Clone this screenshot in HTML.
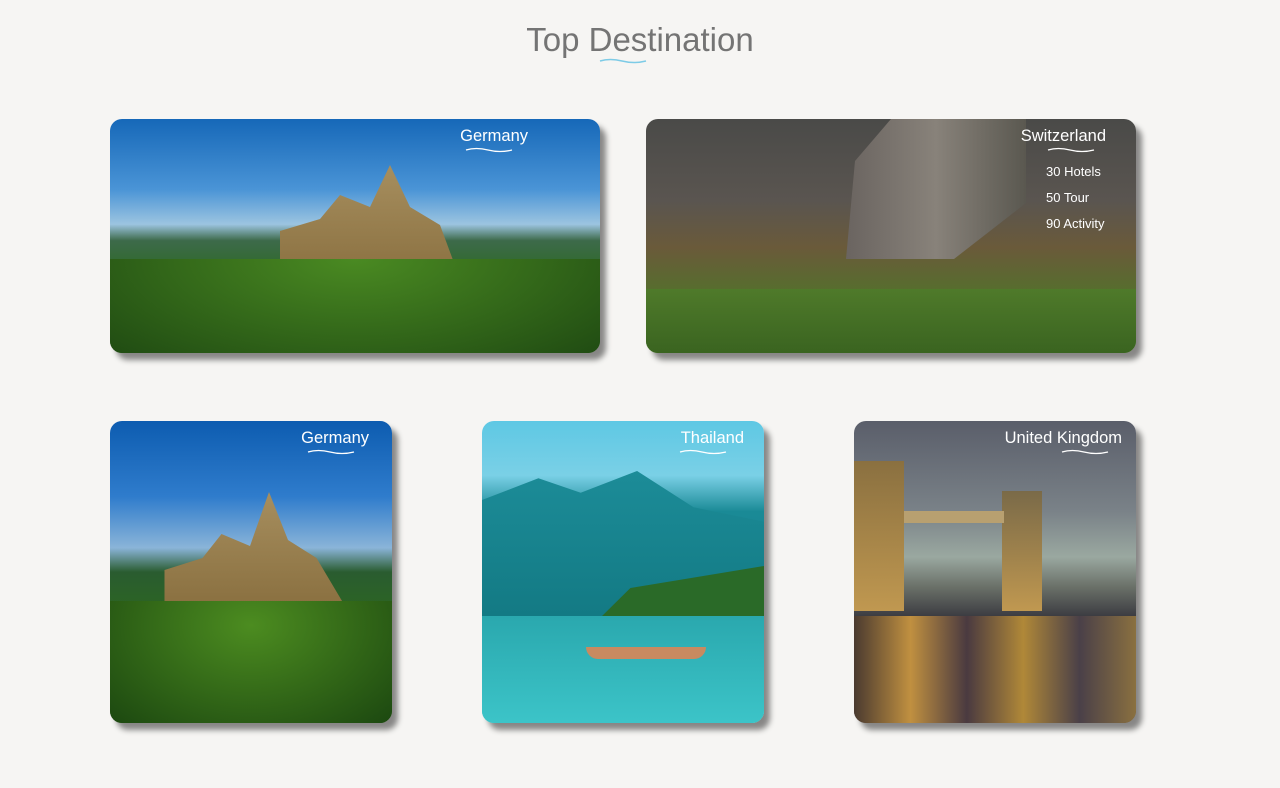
<!DOCTYPE html>
<html><head><meta charset="utf-8"><style>
body{margin:0;width:1280px;height:788px;background:#f6f5f3;font-family:"Liberation Sans",sans-serif;position:relative;overflow:hidden}
h1{position:absolute;top:21px;left:0;width:1280px;text-align:center;margin:0;font-weight:400;font-size:33px;color:#747474}
.card{position:absolute;border-radius:12px;overflow:hidden;box-shadow:6px 7px 6px rgba(0,0,0,.45)}
.lbl{position:absolute;top:8px;right:14px;color:#fff;font-size:16.5px;text-align:right}
.wave{position:absolute;top:27px;right:22px}
.info{position:absolute;top:40px;left:400px;color:#fff;font-size:13px;line-height:26px}
</style></head><body>
<h1>Top Destination</h1>
<svg style="position:absolute;left:598px;top:57px" width="50" height="8"><path d="M2 4 Q12 1 24 4 T48 4" stroke="#7dcbe6" stroke-width="1.5" fill="none"/></svg>

<div class="card" style="left:110px;top:119px;width:490px;height:234px;background:linear-gradient(180deg,#1668b8 0%,#4a94d6 30%,#9cc4e0 45%,#3d6a4a 52%,#2f6a2a 65%,#2d6e1c 80%,#1f4a12 100%)">
<div style="position:absolute;left:150px;top:40px;width:200px;height:120px;background:linear-gradient(#a89060,#8a7040);clip-path:polygon(10% 100%,10% 60%,30% 50%,40% 30%,55% 40%,65% 5%,75% 40%,90% 55%,100% 100%)"></div>
<div style="position:absolute;left:0;top:140px;width:490px;height:100px;background:radial-gradient(ellipse at 50% 0%,#4a8a22,#1f4a12)"></div>
<span class="lbl" style="right:72px">Germany</span>
<svg class="wave" style="right:86px" width="50" height="8"><path d="M2 4 Q12 1 24 4 T48 4" stroke="#fff" stroke-width="1.3" fill="none"/></svg></div>

<div class="card" style="left:646px;top:119px;width:490px;height:234px;background:linear-gradient(180deg,#4a4a48 0%,#5a5550 35%,#6a5a3a 55%,#5a6a30 70%,#4e7a28 85%,#3c6a20 100%)">
<div style="position:absolute;left:200px;top:0;width:180px;height:140px;background:linear-gradient(90deg,#6a6460,#88827a,#5a5850);clip-path:polygon(0 100%,5% 30%,25% 0,100% 0,100% 60%,60% 100%)"></div>
<div style="position:absolute;left:0;top:170px;width:490px;height:64px;background:linear-gradient(#4f7a2a,#3a6420)"></div>
<span class="lbl" style="right:30px">Switzerland</span>
<svg class="wave" style="right:40px" width="50" height="8"><path d="M2 4 Q12 1 24 4 T48 4" stroke="#fff" stroke-width="1.3" fill="none"/></svg>
<div class="info">30 Hotels<br>50 Tour<br>90 Activity</div></div>

<div class="card" style="left:110px;top:421px;width:282px;height:302px;background:linear-gradient(180deg,#0d5cb0 0%,#2f7ccc 25%,#8ab4d8 42%,#2a5c30 50%,#2d6a1c 70%,#3a7c18 85%,#1c4810 100%)">
<div style="position:absolute;left:45px;top:65px;width:190px;height:120px;background:linear-gradient(#a89060,#8a7040);clip-path:polygon(5% 100%,5% 70%,25% 60%,35% 40%,50% 50%,60% 5%,70% 45%,85% 60%,100% 100%)"></div>
<div style="position:absolute;left:0;top:180px;width:282px;height:122px;background:radial-gradient(ellipse at 50% 20%,#4c8c20,#1c4810)"></div>
<span class="lbl" style="right:23px">Germany</span>
<svg class="wave" style="right:36px" width="50" height="8"><path d="M2 4 Q12 1 24 4 T48 4" stroke="#fff" stroke-width="1.3" fill="none"/></svg></div>

<div class="card" style="left:482px;top:421px;width:282px;height:302px;background:linear-gradient(180deg,#5ec8e4 0%,#7ad0e6 18%,#1a8a96 30%,#1a8090 55%,#2a7a40 62%,#2a9aa0 65%,#30b8be 80%,#42c8cc 100%)">
<div style="position:absolute;left:0;top:50px;width:282px;height:145px;background:linear-gradient(#1c8c98,#137a84);clip-path:polygon(0 20%,20% 5%,35% 15%,55% 0,75% 25%,100% 35%,100% 100%,0 100%)"></div>
<div style="position:absolute;left:115px;top:145px;width:167px;height:55px;background:#2a6a28;clip-path:polygon(0 100%,20% 40%,60% 20%,100% 0,100% 100%)"></div>
<div style="position:absolute;left:0;top:195px;width:282px;height:107px;background:linear-gradient(#2aa8ae,#3cc4c8)"></div>
<div style="position:absolute;left:104px;top:226px;width:120px;height:12px;background:#c88a60;border-radius:0 0 40px 40px"></div>
<span class="lbl" style="right:20px">Thailand</span>
<svg class="wave" style="right:36px" width="50" height="8"><path d="M2 4 Q12 1 24 4 T48 4" stroke="#fff" stroke-width="1.3" fill="none"/></svg></div>

<div class="card" style="left:854px;top:421px;width:282px;height:302px;background:linear-gradient(180deg,#5a5e6a 0%,#7a8288 30%,#9aa8a0 45%,#6a7068 55%,#3a3a40 65%,#6a5a40 80%,#3a3440 100%)">
<div style="position:absolute;left:0;top:40px;width:50px;height:150px;background:linear-gradient(#8a7040,#c09850)"></div>
<div style="position:absolute;left:148px;top:70px;width:40px;height:120px;background:linear-gradient(#7a6a48,#c09850)"></div>
<div style="position:absolute;left:50px;top:90px;width:100px;height:12px;background:#b8a070"></div>
<div style="position:absolute;left:0;top:195px;width:282px;height:107px;background:linear-gradient(90deg,#4a3a30,#c09040 20%,#4a3a40 40%,#b08838 60%,#4a4048 80%,#8a7040)"></div>
<span class="lbl">United Kingdom</span>
<svg class="wave" style="right:26px" width="50" height="8"><path d="M2 4 Q12 1 24 4 T48 4" stroke="#fff" stroke-width="1.3" fill="none"/></svg></div>
</body></html>
